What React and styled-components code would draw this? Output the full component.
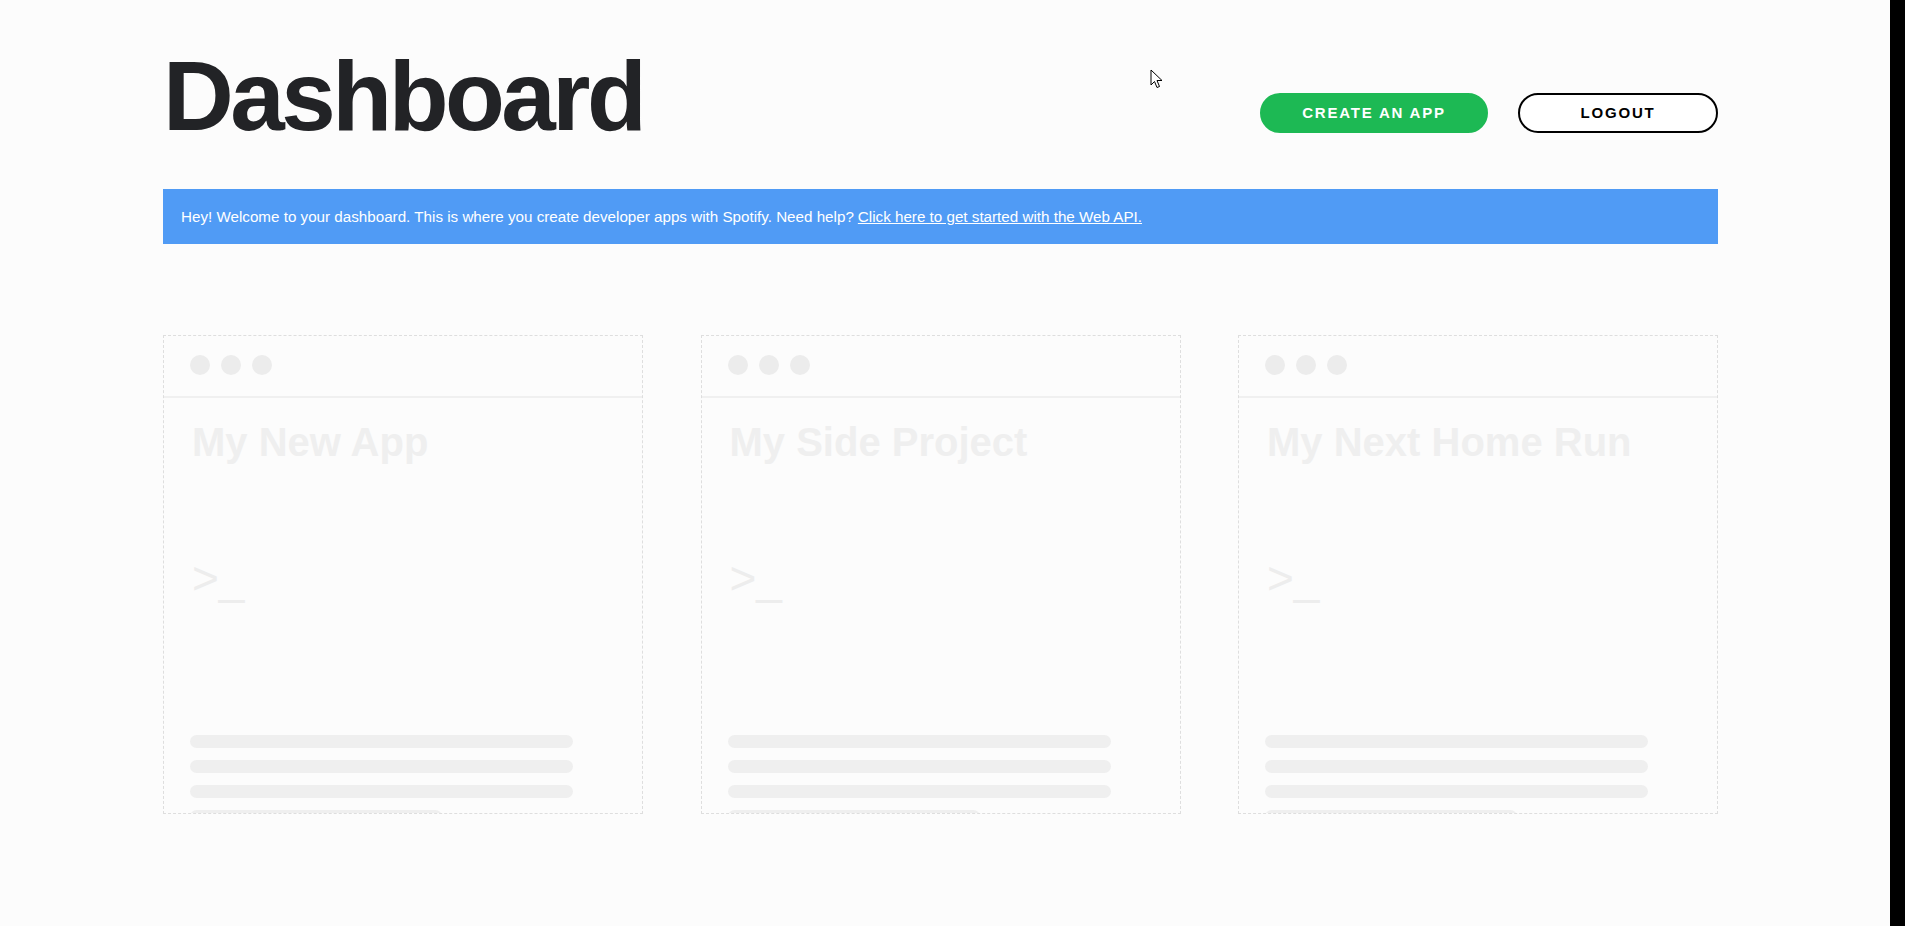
import React from "react";
import styled, { createGlobalStyle } from "styled-components";

const GlobalStyle = createGlobalStyle`
  html, body {
    margin: 0;
    padding: 0;
    background: #fcfcfc;
  }
  body {
    font-family: "Liberation Sans", Arial, sans-serif;
    color: #222326;
  }
`;

const Shell = styled.div`
  display: flex;
  min-height: 100vh;
`;

const Page = styled.main`
  position: relative;
  flex: 1;
  background: #fcfcfc;
`;

const ScrollStrip = styled.div`
  width: 15px;
  background: #000;
`;

const Container = styled.div`
  width: 1555px;
  margin-left: 163px;
`;

const HeaderRow = styled.header`
  display: flex;
  justify-content: space-between;
  align-items: flex-start;
  padding-top: 47px;
`;

const Title = styled.h1`
  margin: 0;
  font-size: 98px;
  line-height: 1;
  font-weight: 700;
  letter-spacing: -3.5px;
  color: #222326;
`;

const Actions = styled.div`
  display: flex;
  gap: 30px;
  margin-top: 46px;
`;

const PillButton = styled.button`
  box-sizing: border-box;
  height: 40px;
  width: ${(p) => p.$width}px;
  border-radius: 20px;
  border: 2px solid ${(p) => (p.$primary ? "#1db954" : "#000")};
  background: ${(p) => (p.$primary ? "#1db954" : "#fff")};
  color: ${(p) => (p.$primary ? "#fff" : "#000")};
  font-family: "Liberation Sans", Arial, sans-serif;
  font-weight: 700;
  font-size: 15px;
  letter-spacing: 1.8px;
  text-transform: uppercase;
  padding: 0 0 2px;
  cursor: pointer;
`;

const Banner = styled.div`
  margin-top: 44px;
  height: 55px;
  display: flex;
  align-items: center;
  padding: 0 18px;
  background: #509bf5;
  color: #fff;
  font-size: 15.2px;
`;

const BannerLink = styled.a`
  color: #fff;
  text-decoration: underline;
  margin-left: 4px;
`;

const CardGrid = styled.section`
  display: grid;
  grid-template-columns: repeat(3, 1fr);
  column-gap: 57.5px;
  margin-top: 91px;
`;

const Card = styled.div`
  box-sizing: border-box;
  height: 479px;
  border: 1px dashed #dedede;
  overflow: hidden;
`;

const CardTop = styled.div`
  display: flex;
  gap: 11px;
  padding: 19px 26px 21px;
  border-bottom: 2px solid #f0f0f0;
`;

const Dot = styled.span`
  width: 20px;
  height: 20px;
  border-radius: 50%;
  background: #ececec;
`;

const CardBody = styled.div`
  padding: 24px 28px 0;
`;

const CardTitle = styled.h2`
  margin: 0;
  font-size: 40px;
  line-height: 1;
  font-weight: 700;
  letter-spacing: 0;
  color: #efefef;
`;

const Prompt = styled.div`
  margin-top: 93px;
  font-size: 46px;
  line-height: 1;
  color: #ededed;
`;

const Lines = styled.div`
  display: flex;
  flex-direction: column;
  gap: 12px;
  margin-top: 134px;
  margin-left: -2px;
`;

const Line = styled.div`
  height: 13px;
  width: ${(p) => p.$width}px;
  border-radius: 7px;
  background: #efefef;
`;

const Cursor = styled.svg`
  position: absolute;
  left: 1150px;
  top: 69px;
`;

const apps = ["My New App", "My Side Project", "My Next Home Run"];

function AppCard({ name }) {
  return (
    <Card>
      <CardTop>
        <Dot />
        <Dot />
        <Dot />
      </CardTop>
      <CardBody>
        <CardTitle>{name}</CardTitle>
        <Prompt>&gt;_</Prompt>
        <Lines>
          <Line $width={383} />
          <Line $width={383} />
          <Line $width={383} />
          <Line $width={252} />
        </Lines>
      </CardBody>
    </Card>
  );
}

export default function App() {
  return (
    <Shell>
      <GlobalStyle />
      <Page>
        <Container>
          <HeaderRow>
            <Title>Dashboard</Title>
            <Actions>
              <PillButton $primary $width={228}>Create an app</PillButton>
              <PillButton $width={200}>Logout</PillButton>
            </Actions>
          </HeaderRow>
          <Banner>
            Hey! Welcome to your dashboard. This is where you create developer apps with Spotify. Need help?
            <BannerLink href="#">Click here to get started with the Web API.</BannerLink>
          </Banner>
          <CardGrid>
            {apps.map((name) => (
              <AppCard key={name} name={name} />
            ))}
          </CardGrid>
        </Container>
        <Cursor width="13" height="20" viewBox="0 0 13 20">
          <path d="M1 1 L1 16 L4.5 12.5 L7 18.5 L9.5 17.5 L7 11.5 L12 11.5 Z" fill="#fff" stroke="#000" strokeWidth="1" />
        </Cursor>
      </Page>
      <ScrollStrip />
    </Shell>
  );
}
